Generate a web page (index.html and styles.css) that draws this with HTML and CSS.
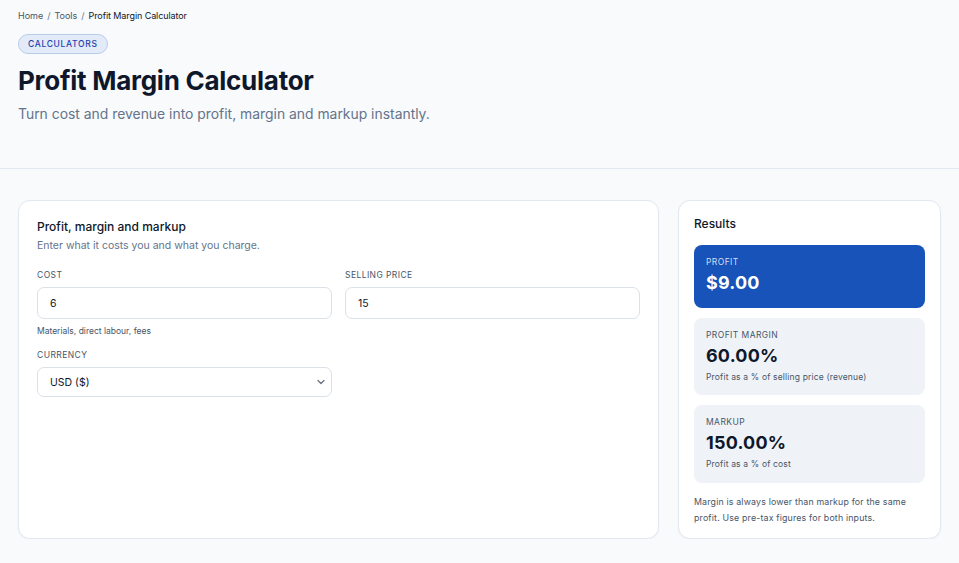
FILE: index.html
```html
<!DOCTYPE html>
<html lang="en">
<head>
    <meta charset="UTF-8">
    <meta name="viewport" content="width=device-width, initial-scale=1.0">
    <title>Profit Margin Calculator</title>
    <link rel="stylesheet" href="styles.css">
</head>
<body>
    <header class="page-head">
        <nav class="crumbs">
            <a href="#">Home</a><span class="sep">/</span><a href="#">Tools</a><span class="sep">/</span><span class="current">Profit Margin Calculator</span>
        </nav>
        <span class="badge">CALCULATORS</span>
        <h1>Profit Margin Calculator</h1>
        <p class="lead">Turn cost and revenue into profit, margin and markup instantly.</p>
    </header>

    <main class="layout">
        <section class="card calc">
            <h2>Profit, margin and markup</h2>
            <p class="card-sub">Enter what it costs you and what you charge.</p>
            <div class="fields">
                <div class="field">
                    <label for="cost">Cost</label>
                    <input id="cost" type="text" value="6">
                    <small>Materials, direct labour, fees</small>
                </div>
                <div class="field">
                    <label for="price">Selling price</label>
                    <input id="price" type="text" value="15">
                </div>
                <div class="field">
                    <label for="currency">Currency</label>
                    <div class="select-wrap">
                        <select id="currency">
                            <option>USD ($)</option>
                            <option>EUR (€)</option>
                            <option>GBP (£)</option>
                        </select>
                        <svg class="chev" width="10" height="10" viewBox="0 0 10 10"><path d="M2 3.5 5 6.5 8 3.5" fill="none" stroke="#6b7280" stroke-width="1.3" stroke-linecap="round" stroke-linejoin="round"/></svg>
                    </div>
                </div>
            </div>
        </section>

        <aside class="card results">
            <h2>Results</h2>
            <div class="stat primary">
                <div class="stat-label">Profit</div>
                <div class="stat-value" id="profit">$9.00</div>
            </div>
            <div class="stat">
                <div class="stat-label">Profit margin</div>
                <div class="stat-value" id="margin">60.00%</div>
                <div class="stat-note">Profit as a % of selling price (revenue)</div>
            </div>
            <div class="stat">
                <div class="stat-label">Markup</div>
                <div class="stat-value" id="markup">150.00%</div>
                <div class="stat-note">Profit as a % of cost</div>
            </div>
            <p class="foot-note">Margin is always lower than markup for the same profit. Use pre-tax figures for both inputs.</p>
        </aside>
    </main>
</body>
</html>
```

FILE: styles.css
```css
* {
    box-sizing: border-box;
}
body {
    margin: 0;
    font-family: Inter, 'Noto Sans', sans-serif;
    background: #f8fafc;
    color: #0f172a;
}
.page-head {
    padding: 10px 18px 0;
    height: 169px;
    border-bottom: 1px solid #e2e8f0;
}
.crumbs {
    font-size: 9px;
    color: #334155;
    line-height: 12px;
}
.crumbs a {
    color: #475569;
    text-decoration: none;
}
.crumbs .sep {
    margin: 0 4px;
    color: #64748b;
}
.crumbs .current {
    color: #0f172a;
    letter-spacing: -0.01em;
}
.badge {
    display: inline-block;
    margin-top: 12px;
    padding: 4px 9px;
    font-size: 8.5px;
    font-weight: 500;
    letter-spacing: 0.08em;
    color: #1e40af;
    background: #e3ebf8;
    border: 1px solid #b9cbeb;
    border-radius: 999px;
}
h1 {
    margin: 11px 0 0;
    font-size: 26px;
    font-weight: 700;
    letter-spacing: -0.01em;
    line-height: 32px;
    color: #0f172a;
}
.lead {
    margin: 9px 0 0;
    font-size: 13.9px;
    color: #64748b;
}
.layout {
    display: grid;
    grid-template-columns: 1fr 263px;
    gap: 19px;
    padding: 31px 18px 0;
}
.card {
    background: #fff;
    border: 1px solid #e2e8f0;
    border-radius: 12px;
    box-shadow: 0 1px 2px rgba(15, 23, 42, 0.04);
    height: 339px;
}
.card h2 {
    margin: 0;
    font-size: 12px;
    font-weight: 500;
    line-height: 16px;
}
.calc {
    padding: 18px 18px;
}
.card-sub {
    margin: 4px 0 0;
    font-size: 10.5px;
    color: #64748b;
}
.fields {
    display: grid;
    grid-template-columns: 1fr 1fr;
    column-gap: 13px;
    row-gap: 14px;
    margin-top: 18px;
}
.field label {
    display: block;
    font-size: 8.5px;
    letter-spacing: 0.05em;
    text-transform: uppercase;
    color: #475569;
    margin-bottom: 7px;
}
.field input,
.field select {
    width: 100%;
    height: 32px;
    padding: 0 12px;
    font-family: inherit;
    font-size: 10.5px;
    color: #0f172a;
    background: #fff;
    border: 1px solid #dbe1e8;
    border-radius: 7px;
    outline: none;
}
.field select {
    height: 30px;
    appearance: none;
}
.field small {
    display: block;
    margin-top: 7px;
    font-size: 8.5px;
    color: #475569;
}
.select-wrap {
    position: relative;
}
.chev {
    position: absolute;
    right: 6px;
    top: 10px;
}
.results {
    padding: 14px 15px;
}
.results h2 {
    margin-top: 1px;
}
.stat {
    margin-top: 10px;
    padding: 12px 12px 13.5px;
    background: #eff3f8;
    border-radius: 8px;
}
.results h2 + .stat {
    margin-top: 13px;
}
.stat-label {
    font-size: 8.5px;
    letter-spacing: 0.05em;
    text-transform: uppercase;
    color: #475569;
}
.stat-value {
    margin-top: 5px;
    font-size: 18px;
    font-weight: 700;
    letter-spacing: 0.01em;
    color: #0f172a;
}
.stat-note {
    margin-top: 6px;
    font-size: 8.5px;
    letter-spacing: 0.02em;
    color: #475569;
}
.stat.primary {
    background: #1753b8;
    padding-bottom: 14.5px;
}
.stat.primary .stat-label {
    color: #d3def2;
}
.stat.primary .stat-value {
    color: #fff;
}
.foot-note {
    margin: 11px 0 0;
    font-size: 8.8px;
    line-height: 16px;
    letter-spacing: 0.02em;
    color: #475569;
}
```
